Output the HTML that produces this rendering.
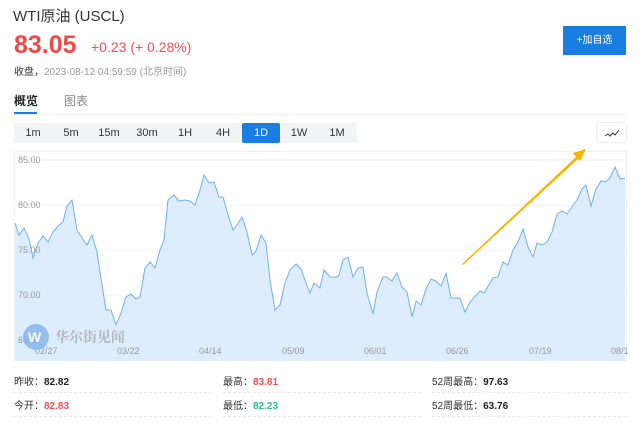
<!DOCTYPE html><html><head><meta charset="utf-8"><style>
body{margin:0;width:640px;height:427px;background:#fff;font-family:"Liberation Sans","Noto Sans CJK SC",sans-serif;position:relative;overflow:hidden}
.a{position:absolute;white-space:nowrap}
.tabs{position:absolute;left:14px;top:123px;width:343px;height:20px;background:#f3f4f6;display:flex}
.tabs div{width:38px;text-align:center;font-size:11px;line-height:20px;color:#333}
.tabs .on{background:#1a7ee0;color:#fff;border-radius:2px}
.st{font-size:10px;color:#333}.st b{color:#222}
.ln{position:absolute;height:0;border-top:1px dashed #e8e8e8}
</style></head><body>
<div class="a" style="left:13px;top:5px;font-size:15px;color:#333">WTI原油 (USCL)</div>
<div class="a" style="left:14px;top:31px;font-size:25px;color:#f04848;font-weight:bold">83.05</div>
<div class="a" style="left:91px;top:39px;font-size:14px;color:#f05050">+0.23 (+ 0.28%)</div>
<div class="a" style="left:14px;top:63px;font-size:10px;color:#999"><span style="color:#333">收盘，</span>2023-08-12 04:59:59 (北京时间)</div>
<div class="a" style="left:563px;top:26px;width:63px;height:29px;background:#1a7ee0;color:#fff;font-size:10px;line-height:29px;text-align:center">+加自选</div>
<div class="a" style="left:14px;top:92px;font-size:12px;color:#222;font-weight:bold">概览</div>
<div class="a" style="left:14px;top:112px;width:23px;height:2px;background:#1a7ee0"></div>
<div class="a" style="left:64px;top:92px;font-size:12px;color:#888">图表</div>
<div class="a" style="left:14px;top:114px;width:612px;height:1px;background:#f2f2f2"></div>
<div class="tabs"><div>1m</div><div>5m</div><div>15m</div><div>30m</div><div>1H</div><div>4H</div><div class="on">1D</div><div>1W</div><div>1M</div></div>
<div class="a" style="left:597px;top:123px;width:29px;height:19px;border-radius:2px;box-shadow:0 0 2px #ccc;background:#fff"><svg width="29" height="19"><path d="M8 13l3-2 2 2 3-3 2 2 4-5" fill="none" stroke="#333" stroke-width="1"/></svg></div>
<svg class="a" style="left:0;top:0" width="640" height="427">
<rect x="14.5" y="151.5" width="612" height="209" fill="none" stroke="#f0f0f0"/>
<g stroke="#f0f0f0"><line x1="15" y1="160" x2="626" y2="160"/><line x1="15" y1="205" x2="626" y2="205"/><line x1="15" y1="250" x2="626" y2="250"/><line x1="15" y1="295" x2="626" y2="295"/></g>
<polygon fill="#deedfd" points="15,360 15,223 19,235 24,228 29,239 33,258 38,243 43,236 48,242 53,232 58,226 63,222 67,206 72,200 77,230 82,238 87,245 92,235 97,252 100,272 106,310 111,310 116,325 121,313 126,297 131,294 136,299 140,297 145,268 150,262 155,268 160,250 164,240 168,200 174,195 179,201 185,200 190,201 195,205 200,190 204,175 209,183 214,182 219,197 223,197 228,215 233,230 237,225 242,217 247,232 252,255 256,251 261,235 266,243 270,280 275,310 280,305 285,283 290,270 296,264 301,269 306,283 310,293 314,283 320,288 324,270 330,277 337,277 339,275 343,260 348,257 353,277 358,268 363,267 367,293 373,314 377,292 383,277 387,277 392,281 397,273 402,287 407,292 412,317 416,301 421,305 426,289 431,279 436,281 441,286 446,273 451,298 460,298 465,312 470,302 480,291 484,293 493,278 498,277 503,262 508,265 513,250 518,242 523,229 528,247 533,257 537,243 542,245 547,242 552,232 557,214 562,211 567,214 572,207 577,200 582,189 586,185 591,206 596,189 601,181 605,182 610,178 615,167 620,179 625,178 625,360"/>
<polyline fill="none" stroke="#6fb0f5" stroke-width="1" points="15,223 19,235 24,228 29,239 33,258 38,243 43,236 48,242 53,232 58,226 63,222 67,206 72,200 77,230 82,238 87,245 92,235 97,252 100,272 106,310 111,310 116,325 121,313 126,297 131,294 136,299 140,297 145,268 150,262 155,268 160,250 164,240 168,200 174,195 179,201 185,200 190,201 195,205 200,190 204,175 209,183 214,182 219,197 223,197 228,215 233,230 237,225 242,217 247,232 252,255 256,251 261,235 266,243 270,280 275,310 280,305 285,283 290,270 296,264 301,269 306,283 310,293 314,283 320,288 324,270 330,277 337,277 339,275 343,260 348,257 353,277 358,268 363,267 367,293 373,314 377,292 383,277 387,277 392,281 397,273 402,287 407,292 412,317 416,301 421,305 426,289 431,279 436,281 441,286 446,273 451,298 460,298 465,312 470,302 480,291 484,293 493,278 498,277 503,262 508,265 513,250 518,242 523,229 528,247 533,257 537,243 542,245 547,242 552,232 557,214 562,211 567,214 572,207 577,200 582,189 586,185 591,206 596,189 601,181 605,182 610,178 615,167 620,179 625,178"/>
<g font-size="9" fill="#999" font-family="Liberation Sans,sans-serif"><text x="18" y="163">85.00</text><text x="18" y="208">80.00</text><text x="18" y="253">75.00</text><text x="18" y="298">70.00</text><text x="18" y="343">65.00</text>
<text x="35" y="354">02/27</text><text x="117" y="354">03/22</text><text x="199" y="354">04/14</text><text x="282" y="354">05/09</text><text x="364" y="354">06/01</text><text x="446" y="354">06/26</text><text x="529" y="354">07/19</text><text x="611" y="354">08/1</text></g>
<polygon points="462,264 576,157 573,153 586,149 580,161 578,159 463,265" fill="#f7b500"/>
<circle cx="36" cy="337" r="13" fill="#7fb2ea" opacity="0.8"/><text x="28" y="342" font-size="14" fill="#fff" font-weight="bold">W</text>
<text x="55" y="342" font-size="14" fill="#aaa" opacity="0.8" font-family="Noto Serif CJK SC,serif" font-weight="bold">华尔街见闻</text>
</svg>
<div class="a" style="left:14px;top:360px;width:612px;height:1px;background:#dfeefd"></div>
<div class="a st" style="left:14px;top:373px">昨收：<b>82.82</b></div>
<div class="a st" style="left:223px;top:373px">最高：<b style="color:#f05050">83.81</b></div>
<div class="a st" style="left:432px;top:373px">52周最高：<b>97.63</b></div>
<div class="a st" style="left:14px;top:397px">今开：<b style="color:#f05050">82.83</b></div>
<div class="a st" style="left:223px;top:397px">最低：<b style="color:#2cbf8a">82.23</b></div>
<div class="a st" style="left:432px;top:397px">52周最低：<b>63.76</b></div>
<div class="ln" style="left:14px;top:392px;width:198px"></div><div class="ln" style="left:223px;top:392px;width:198px"></div><div class="ln" style="left:432px;top:392px;width:194px"></div>
<div class="ln" style="left:14px;top:416px;width:198px"></div><div class="ln" style="left:223px;top:416px;width:198px"></div><div class="ln" style="left:432px;top:416px;width:194px"></div>
</body></html>
